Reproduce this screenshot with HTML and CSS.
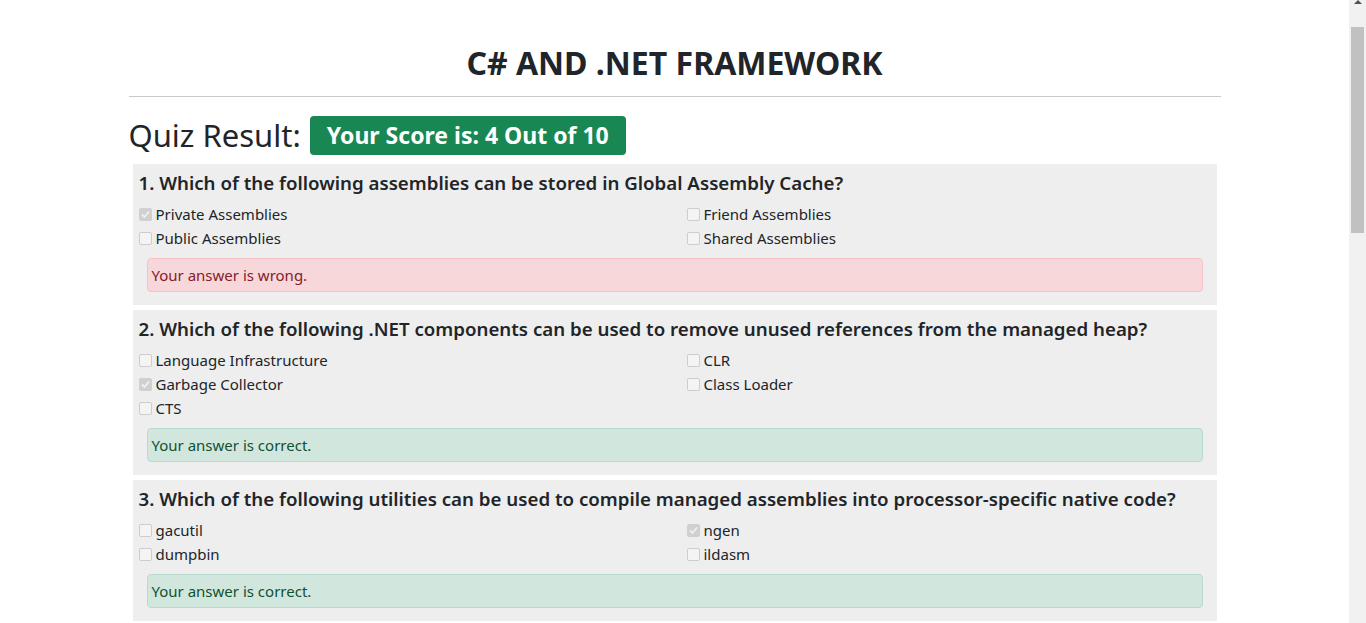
FILE: index.html
```html
<!DOCTYPE html>
<html lang="en">
<head>
<meta charset="utf-8">
<title>C# AND .NET FRAMEWORK - Quiz Result</title>
<link rel="stylesheet" href="styles.css">
</head>
<body>
<div class="page">
<main class="main">
<div class="container">
  <h2 class="title">C# AND .NET FRAMEWORK</h2>
  <hr class="rule">
  <h2 class="result">Quiz Result: <span class="badge">Your Score is: 4 Out of 10</span></h2>

  <div class="question">
    <h5 class="q-title">1. Which of the following assemblies can be stored in Global Assembly Cache?</h5>
    <div class="options">
      <label class="option"><input type="checkbox" checked disabled><span>Private Assemblies</span></label>
      <label class="option"><input type="checkbox" disabled><span>Friend Assemblies</span></label>
      <label class="option"><input type="checkbox" disabled><span>Public Assemblies</span></label>
      <label class="option"><input type="checkbox" disabled><span>Shared Assemblies</span></label>
    </div>
    <div class="alert alert-wrong">Your answer is wrong.</div>
  </div>

  <div class="question">
    <h5 class="q-title">2. Which of the following .NET components can be used to remove unused references from the managed heap?</h5>
    <div class="options">
      <label class="option"><input type="checkbox" disabled><span>Language Infrastructure</span></label>
      <label class="option"><input type="checkbox" disabled><span>CLR</span></label>
      <label class="option"><input type="checkbox" checked disabled><span>Garbage Collector</span></label>
      <label class="option"><input type="checkbox" disabled><span>Class Loader</span></label>
      <label class="option"><input type="checkbox" disabled><span>CTS</span></label>
    </div>
    <div class="alert alert-correct">Your answer is correct.</div>
  </div>

  <div class="question">
    <h5 class="q-title">3. Which of the following utilities can be used to compile managed assemblies into processor-specific native code?</h5>
    <div class="options">
      <label class="option"><input type="checkbox" disabled><span>gacutil</span></label>
      <label class="option"><input type="checkbox" checked disabled><span>ngen</span></label>
      <label class="option"><input type="checkbox" disabled><span>dumpbin</span></label>
      <label class="option"><input type="checkbox" disabled><span>ildasm</span></label>
    </div>
    <div class="alert alert-correct">Your answer is correct.</div>
  </div>
</div>
</main>
<div class="scrollbar" aria-hidden="true">
  <div class="scroll-arrow"></div>
  <div class="scroll-thumb"></div>
</div>
</div>
</body>
</html>
```

FILE: styles.css
```css
html, body {
  height: 100%;
}

body {
  margin: 0;
  overflow: hidden;
  font-family: "Noto Sans", "Open Sans", sans-serif;
  color: #212529;
  background: #fff;
}

.page {
  display: flex;
  height: 100vh;
}

.main {
  flex: 1;
  min-width: 0;
  overflow: hidden;
}

.scrollbar {
  width: 17px;
  flex: none;
  background: #f1f1f1;
  display: flex;
  flex-direction: column;
  align-items: center;
}

.scroll-arrow {
  width: 0;
  height: 0;
  margin-top: 0;
  margin-left: 1px;
  border-left: 4px solid transparent;
  border-right: 4px solid transparent;
  border-bottom: 4px solid #505050;
}

.scroll-thumb {
  width: 13px;
  height: 206px;
  margin-top: 23px;
  background: #c1c1c1;
}

.container {
  width: 1092px;
  margin: 0 auto;
}

.title {
  margin: 44px 0 14px;
  font-size: 32px;
  line-height: 38px;
  font-weight: 700;
  text-align: center;
}

.rule {
  margin: 0;
  border: 0;
  border-top: 1px solid #c8c9ca;
}

.result {
  display: flex;
  align-items: center;
  gap: 9px;
  margin: 19px 0 9px;
  font-size: 31px;
  line-height: 39px;
  font-weight: 400;
}

.badge {
  display: inline-block;
  background: #198754;
  color: #fff;
  font-size: 23px;
  font-weight: 700;
  line-height: 24px;
  padding: 7px 17px 8px;
  border-radius: 4px;
}

.question {
  background: #eeeeee;
  margin: 0 4px 5px;
  padding: 7px 6px 13px;
}

.q-title {
  margin: 0;
  font-size: 18.7px;
  line-height: 24px;
  font-weight: 600;
}

.options {
  display: grid;
  grid-template-columns: 548px 1fr;
  margin-top: 7px;
}

.option {
  display: flex;
  align-items: center;
  height: 24px;
  font-size: 15px;
  line-height: 24px;
}

.option input {
  appearance: none;
  -webkit-appearance: none;
  box-sizing: border-box;
  width: 13px;
  height: 13px;
  margin: 0 4px 0 0;
  border: 1px solid #cdcdcd;
  border-radius: 2px;
  background: #f4f4f4;
}

.option input:checked {
  border-color: #d0d0d0;
  background-color: #d0d0d0;
  background-repeat: no-repeat;
  background-position: center;
  background-image: url("data:image/svg+xml;utf8,<svg xmlns='http://www.w3.org/2000/svg' width='11' height='11'><polyline points='2,5.5 4.5,8 9,2.5' fill='none' stroke='%23f0f0f0' stroke-width='1.8'/></svg>");
}

.alert {
  margin: 8px 8px 0;
  padding: 4px;
  border: 1px solid transparent;
  border-radius: 4px;
  font-size: 15px;
  line-height: 24px;
}

.alert-wrong {
  background: #f8d7da;
  border-color: #f5c2c7;
  color: #842029;
}

.alert-correct {
  background: #d1e7dd;
  border-color: #badbcc;
  color: #0f5132;
}
```
